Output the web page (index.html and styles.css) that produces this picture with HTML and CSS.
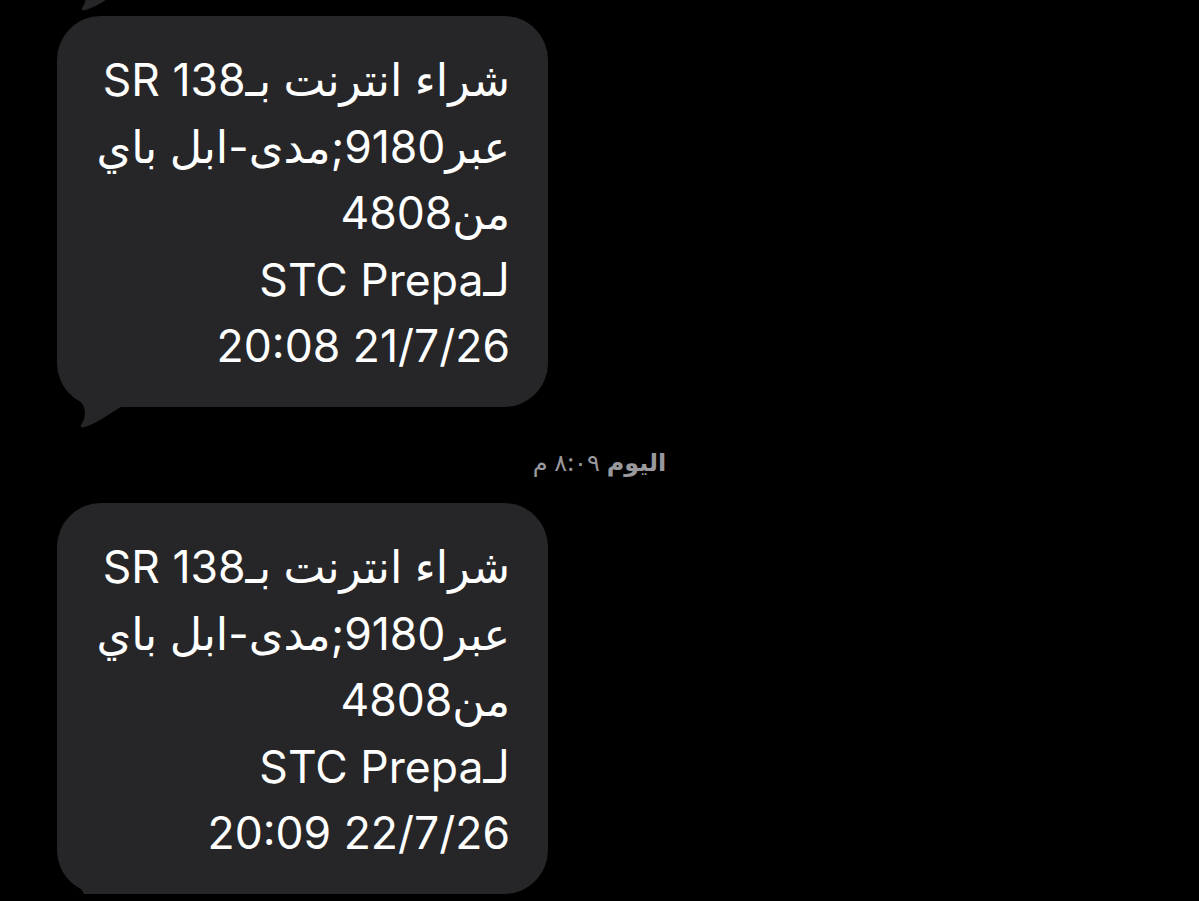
FILE: index.html
```html
<!DOCTYPE html>
<html lang="ar">
<head>
    <meta charset="UTF-8">
    <meta name="viewport" content="width=device-width, initial-scale=1.0">
    <title>الرسائل</title>
    <link rel="stylesheet" href="styles.css">
</head>
<body>
    <div class="thread">
        <!-- tail of the earlier message, scrolled mostly out of view -->
        <div class="prev-tail">
            <svg class="tail" viewBox="0 0 90 70" width="90" height="70"><path d="M0,0 C0,30 28,36 28,52 C28,58 26,62 24,65 C23,67 25,68 28,67 C40,63 52,54 64,47 L90,47 L90,0 Z"/></svg>
        </div>

        <div class="bubble">
            <div class="msg" dir="rtl">
                <span class="line">شراء انترنت بـ138 SR</span>
                <span class="line">عبر9180;مدى-ابل باي</span>
                <span class="line">من4808</span>
                <span class="line">لـSTC Prepa</span>
                <span class="line">21/7/26 20:08</span>
            </div>
            <svg class="tail" viewBox="0 0 90 70" width="90" height="70"><path d="M0,0 C0,30 28,36 28,52 C28,58 26,62 24,65 C23,67 25,68 28,67 C40,63 52,54 64,47 L90,47 L90,0 Z"/></svg>
        </div>

        <div class="stamp" dir="rtl"><b>اليوم</b> ٨:٠٩ م</div>

        <div class="bubble">
            <div class="msg" dir="rtl">
                <span class="line">شراء انترنت بـ138 SR</span>
                <span class="line">عبر9180;مدى-ابل باي</span>
                <span class="line">من4808</span>
                <span class="line">لـSTC Prepa</span>
                <span class="line">22/7/26 20:09</span>
            </div>
            <svg class="tail" viewBox="0 0 90 70" width="90" height="70"><path d="M0,0 C0,30 28,36 28,52 C28,58 26,62 24,65 C23,67 25,68 28,67 C40,63 52,54 64,47 L90,47 L90,0 Z"/></svg>
        </div>
    </div>
</body>
</html>
```

FILE: styles.css
```css
html, body {
    margin: 0;
    background: #000;
    overflow: hidden;
}
body {
    font-family: Inter, "DejaVu Sans", sans-serif;
    color: #fff;
}
.thread {
    display: flex;
    flex-direction: column;
    padding-top: 16px;
}
.prev-tail {
    position: relative;
    height: 0;
    margin-left: 58px;
}
.prev-tail .tail {
    top: -73px;
    left: 0;
}
.bubble {
    position: relative;
    box-sizing: border-box;
    width: 491px;
    height: 391px;
    margin-left: 57px;
    padding: 31px 38px 28px;
    background: #262628;
    border-radius: 44px;
}
.tail {
    position: absolute;
    left: 0;
    top: calc(100% - 47px);
    fill: #262628;
}
.msg {
    position: relative;
    z-index: 1;
    font-size: 44.5px;
    line-height: 66.5px;
    text-align: right;
}
.line {
    display: block;
    white-space: nowrap;
}
.stamp {
    margin: 42px 0 26px;
    font-size: 24px;
    line-height: 28px;
    text-align: center;
    color: #98989d;
}
.stamp b {
    font-weight: 600;
}
```
